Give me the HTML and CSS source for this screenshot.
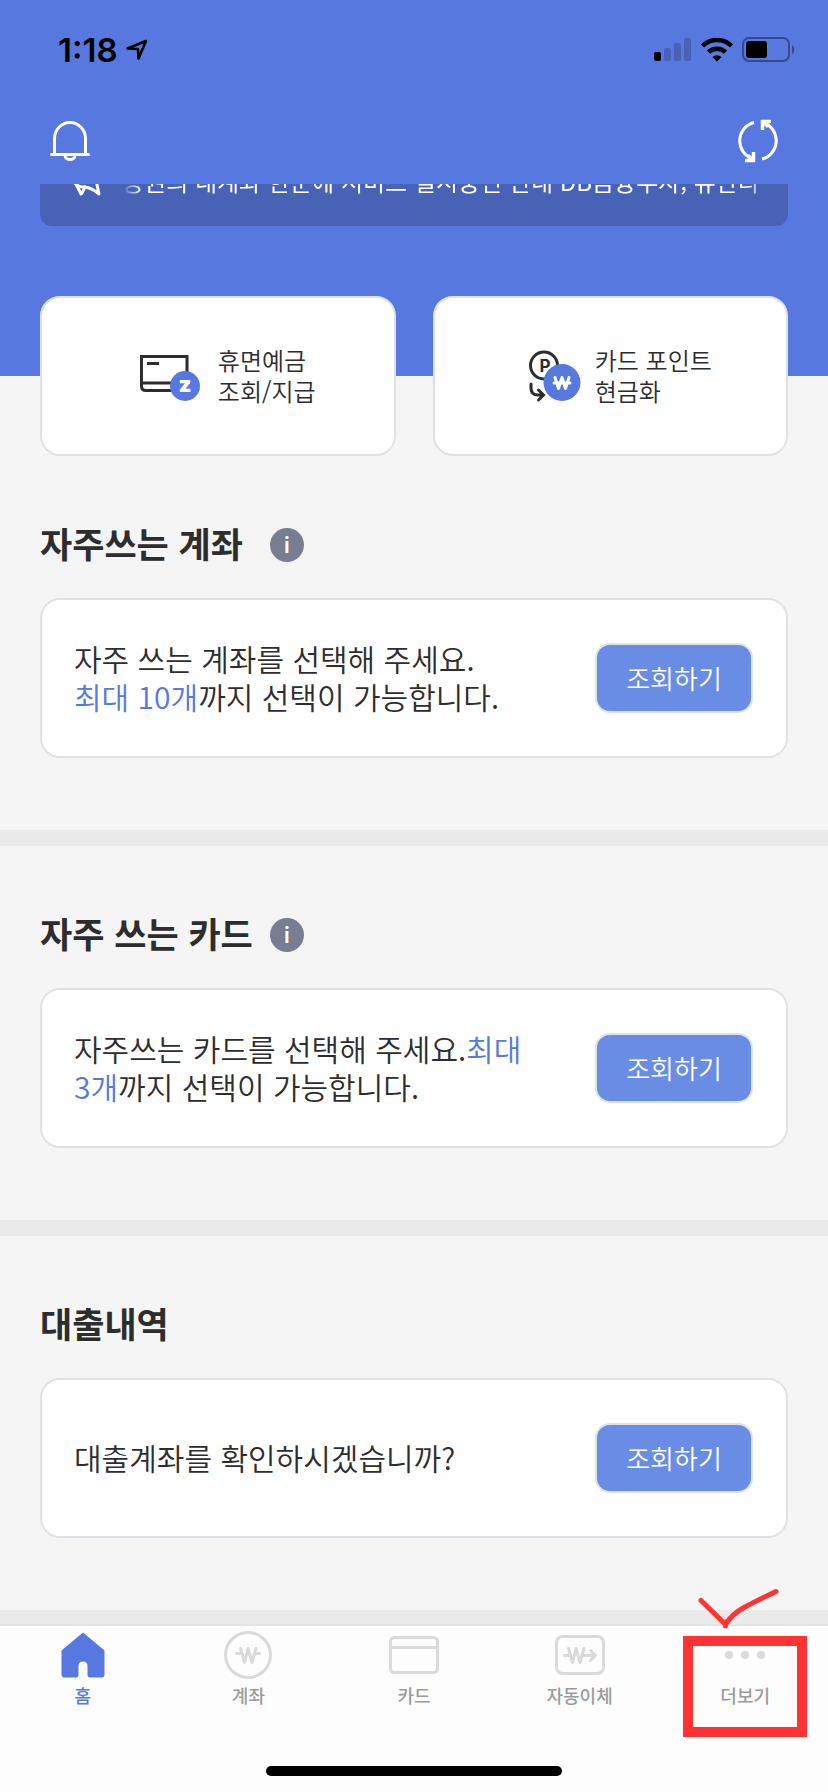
FILE: index.html
```
<!DOCTYPE html>
<html lang="ko">
<head>
    <meta charset="UTF-8">
    <meta name="viewport" content="width=device-width, initial-scale=1.0">
    <title>내 계좌 한눈에</title>
    <link rel="stylesheet" href="styles.css">
</head>
<body>
    <header class="top">
        <div class="status-bar">
            <div class="clock">
                <span>1:18</span>
                <svg width="22" height="22" viewBox="0 0 22 22"><path d="M1.500 9.500 20 2l-7.500 17.500-.5-9.500z" fill="none" stroke="#000" stroke-width="2.600" stroke-linejoin="round"/></svg>
            </div>
            <div class="signals">
                <svg width="38" height="24" viewBox="0 0 38 24">
                    <rect x="0" y="14" width="7" height="9" rx="2"/>
                    <g fill="#4862b5">
                        <rect x="10" y="10" width="7" height="13" rx="2"/>
                        <rect x="20" y="5" width="7" height="18" rx="2"/>
                        <rect x="30" y="0" width="7" height="23" rx="2"/>
                    </g>
                </svg>
                <svg width="32" height="24" viewBox="0 0 32 24">
                    <g fill="none" stroke="#000" stroke-width="4.500">
                        <path d="M1.500 8a20.500 20.500 0 0 1 29 0"/>
                        <path d="M7.500 14.200a12 12 0 0 1 17 0"/>
                    </g>
                    <path d="M11.500 19a7 7 0 0 1 9 0L16 23.600z"/>
                </svg>
                <svg width="53" height="25" viewBox="0 0 53 25">
                    <rect x="1" y="1" width="46" height="23" rx="6" fill="none" stroke="#36498a" stroke-width="2"/>
                    <rect x="4" y="4" width="21" height="17" rx="3"/>
                    <path d="M50 8c3 1 3 8 0 9z" fill="#36498a"/>
                </svg>
            </div>
        </div>
        <div class="toolbar">
            <button class="icon-btn" aria-label="알림">
                <svg width="40" height="40" viewBox="0 0 40 40" fill="none" stroke="#fff" stroke-width="3" stroke-linecap="round">
                    <path d="M4.500 33V17.500a15.500 16 0 0 1 31 0V33M1.500 33.500h37M15 34.500a5 4 0 0 0 10 0"/>
                </svg>
            </button>
            <button class="icon-btn" aria-label="새로고침">
                <svg width="42" height="44" viewBox="0 0 42 44" fill="none" stroke="#fff" stroke-width="3">
                    <path d="M17 3.500a19 19 0 0 0-1 36.500M25 40a19 19 0 0 0 1-36.500"/>
                    <path d="M8 41.500h8.500V33M34 2.500h-8.500V11" stroke-width="3.500"/>
                    <path d="M11 36l5 5M31 8l-5-5"/>
                </svg>
            </button>
        </div>
        <div class="notice">
            <svg width="32" height="32" viewBox="0 0 32 32" fill="none" stroke="#fff" stroke-width="3" stroke-linejoin="round" stroke-linecap="round">
                <path d="M1.500 14 23 2l6 28q-7-6-14-7-9 1-13.500-9z"/>
                <path d="M7 22l4 8M15 23l-3 6"/>
            </svg>
            <p>증권의 내계좌 한눈에 서비스 실시중인 안내 DB금융투자, 유안타</p>
        </div>
    </header>

    <nav class="quick">
        <a href="#" class="quick-card">
            <svg width="64" height="56" viewBox="0 0 64 56">
                <g fill="none" stroke="#2d2d2d" stroke-width="3">
                    <path d="M47 28V8.500H1.500V38q0 4.500 4.500 4.500h28M1.500 35h34M7 15.500h12"/>
                </g>
                <circle cx="45" cy="38" r="15" fill="#5678df"/>
                <text x="45" y="44" class="icon-z">z</text>
            </svg>
            <span>휴면예금<br>조회/지급</span>
        </a>
        <a href="#" class="quick-card">
            <svg width="52" height="56" viewBox="0 0 52 56">
                <g fill="none" stroke="#2d2d2d" stroke-width="3" stroke-linecap="round">
                    <circle cx="15" cy="17.500" r="13.500"/>
                    <path d="M2 36v4q0 7 7 7h5M9.500 42l5 5-5 5"/>
                </g>
                <text x="16" y="24" class="icon-p">P</text>
                <circle cx="33" cy="34.500" r="18.500" fill="#5678df"/>
                <path d="M26 29.500l3.500 11 3.500-11 3.500 11 3.500-11M25 35h16" fill="none" stroke="#fff" stroke-width="3" stroke-linecap="round" stroke-linejoin="round"/>
            </svg>
            <span>카드 포인트<br>현금화</span>
        </a>
    </nav>

    <main>
        <section class="block">
            <div class="block-head">
                <h2>자주쓰는 계좌</h2>
                <button class="info" aria-label="안내">i</button>
            </div>
            <div class="card">
                <p>자주 쓰는 계좌를 선택해 주세요.<br><em>최대 10개</em>까지 선택이 가능합니다.</p>
                <button class="lookup">조회하기</button>
            </div>
        </section>
        <section class="block">
            <div class="block-head">
                <h2>자주 쓰는 카드</h2>
                <button class="info" aria-label="안내">i</button>
            </div>
            <div class="card">
                <p>자주쓰는 카드를 선택해 주세요.<em>최대<br>3개</em>까지 선택이 가능합니다.</p>
                <button class="lookup">조회하기</button>
            </div>
        </section>
        <section class="block">
            <div class="block-head">
                <h2>대출내역</h2>
            </div>
            <div class="card">
                <p>대출계좌를 확인하시겠습니까?</p>
                <button class="lookup">조회하기</button>
            </div>
        </section>
    </main>

    <footer class="tab-bar">
        <nav class="tabs">
            <a href="#" class="tab active">
                <svg width="50" height="48" viewBox="0 0 50 48"><path d="M25 1.500 46.500 19.500V43.500q0 3-3 3H32q-2.500 0-2.500-3V35q0-4.500-4.500-4.500T20.500 35v8.500q0 3-2.500 3H6.500q-3 0-3-3v-24z" fill="#5678df"/></svg>
                <span>홈</span>
            </a>
            <a href="#" class="tab">
                <svg width="50" height="48" viewBox="0 0 50 48" fill="none" stroke="#dadada" stroke-width="3" stroke-linecap="round" stroke-linejoin="round">
                    <circle cx="25" cy="24" r="22.500"/>
                    <path d="M17.500 17.500l4 14 3.500-14 4 14 4-14M13.500 22.500h6M31 22.500h5.500"/>
                </svg>
                <span>계좌</span>
            </a>
            <a href="#" class="tab">
                <svg width="50" height="48" viewBox="0 0 50 48" fill="none" stroke="#dadada" stroke-width="3">
                    <rect x="1.500" y="6.500" width="47" height="35" rx="4"/>
                    <path d="M2 16.500h46"/>
                </svg>
                <span>카드</span>
            </a>
            <a href="#" class="tab">
                <svg width="50" height="48" viewBox="0 0 50 48" fill="none" stroke="#dadada" stroke-width="3" stroke-linecap="round" stroke-linejoin="round">
                    <rect x="1.500" y="5.500" width="47" height="37" rx="6"/>
                    <path d="M13.500 17.500l4 14 3.500-14 4 14 4-14M9.500 24.500h6M27 24.500h13M35.500 19.500l5 5-5 5"/>
                </svg>
                <span>자동이체</span>
            </a>
            <a href="#" class="tab marked">
                <svg width="50" height="48" viewBox="0 0 50 48" fill="#dadada">
                    <circle cx="9" cy="24" r="4"/><circle cx="25" cy="24" r="4"/><circle cx="41" cy="24" r="4"/>
                </svg>
                <span>더보기</span>
                <svg class="check" width="84" height="42" viewBox="0 0 84 42"><path d="M5 12.500 29.500 36.500Q36 26 48 19.500T80 3.500M29.500 34v4" fill="none" stroke="#f33" stroke-width="5" stroke-linecap="round" stroke-linejoin="round"/></svg>
            </a>
        </nav>
        <div class="home-indicator"></div>
    </footer>
</body>
</html>
```
FILE: styles.css
```
*,
*::after {
    box-sizing: border-box;
}
body {
    margin: 0;
    background: #f5f5f5;
    color: #2d2d2d;
    font-family: "Noto Sans CJK KR", sans-serif;
}
button {
    font-family: inherit;
    padding: 0;
    border: none;
    cursor: pointer;
}
a {
    color: inherit;
    text-decoration: none;
}
svg {
    display: block;
    flex: none;
}

/* Header */
.top {
    height: 376px;
    background: #5678df;
}
.status-bar {
    display: flex;
    justify-content: space-between;
    align-items: center;
    height: 99px;
    padding: 0 33px 0 58px;
}
.clock {
    display: flex;
    align-items: center;
    gap: 8px;
    color: #000;
    font: 600 33px/40px Inter, sans-serif;
}
.signals {
    display: flex;
    align-items: center;
    gap: 9px;
}
.toolbar {
    display: flex;
    justify-content: space-between;
    align-items: center;
    height: 85px;
    padding: 0 49px 2px 50px;
}
.icon-btn {
    background: none;
}
.notice {
    display: flex;
    align-items: flex-end;
    gap: 20px;
    height: 42px;
    margin: 0 40px;
    padding: 0 20px 27px 30px;
    background: #4862b5;
    border-radius: 0 0 12px 12px;
    overflow: hidden;
}
.notice svg {
    margin-bottom: 3px;
}
.notice p {
    flex: 1;
    margin: 0;
    color: #fff;
    font-size: 24px;
    line-height: 36px;
    white-space: nowrap;
    overflow: hidden;
    mask-image: linear-gradient(to right, transparent, #000 20px, #000 calc(100% - 20px), transparent);
}

/* Shortcut cards, they overlap the blue header */
.quick {
    display: flex;
    gap: 37px;
    margin: -80px 40px 0;
}
.quick-card {
    flex: 1;
    display: flex;
    align-items: center;
    justify-content: center;
    gap: 14px;
    height: 160px;
    padding-left: 20px;
    background: #fff;
    border: 2px solid #dee2e6;
    border-radius: 20px;
    font-size: 24px;
    line-height: 31px;
    font-weight: 350;
}
.quick-card span,
.card p {
    padding-bottom: 3px;
}
.icon-z,
.icon-p {
    font-family: Inter, sans-serif;
    text-anchor: middle;
}
.icon-z {
    font-size: 22px;
    font-weight: 900;
    fill: #fff;
}
.icon-p {
    font-size: 17px;
    font-weight: 700;
    fill: #2d2d2d;
}

/* Sections */
.block {
    padding: 0 40px 72px;
    border-bottom: 16px solid #eaeaea;
}
.block-head {
    display: flex;
    align-items: center;
    gap: 16px;
    height: 142px;
    padding-top: 36px;
}
.block-head h2 {
    min-width: 214px;
    margin: 0;
    padding-bottom: 4px;
    font-size: 35px;
    line-height: 48px;
    font-weight: 700;
}
.info {
    width: 34px;
    height: 34px;
    border-radius: 50%;
    background: #777e93;
    color: #fff;
    font: 600 22px/34px Inter, sans-serif;
}
.card {
    display: flex;
    align-items: center;
    justify-content: space-between;
    height: 160px;
    padding: 0 33px 0 32px;
    background: #fff;
    border: 2px solid #dee2e6;
    border-radius: 20px;
}
.card p {
    margin: 0;
    font-size: 30px;
    line-height: 38px;
    font-weight: 350;
}
.card em {
    color: #5678df;
    font-style: normal;
}
.lookup {
    width: 158px;
    height: 70px;
    padding-bottom: 2px;
    background: #698de4;
    border: 2px solid #dee2e6;
    border-radius: 15px;
    color: #fff;
    font-size: 26px;
    font-weight: 350;
}

/* Bottom tab bar */
.tab-bar {
    height: 168px;
    margin-top: -2px;
    background: #fdfdfd;
    border-top: 2px solid #e4e4e4;
}
.tabs {
    display: flex;
    height: 140px;
    padding-top: 5px;
}
.tab {
    position: relative;
    flex: 1;
    display: flex;
    flex-direction: column;
    align-items: center;
    gap: 3px;
    color: #9b9b9b;
    font-size: 18px;
    line-height: 26px;
    font-weight: 500;
}
.tab.active {
    color: #5678df;
}
.marked::after {
    content: "";
    position: absolute;
    top: 5px;
    left: 21px;
    right: 21px;
    height: 101px;
    border: 10px solid #f33;
}
.check {
    position: absolute;
    top: -43px;
    left: 34px;
}
.home-indicator {
    width: 296px;
    height: 10px;
    margin: 0 auto;
    border-radius: 5px;
    background: #000;
}
```
